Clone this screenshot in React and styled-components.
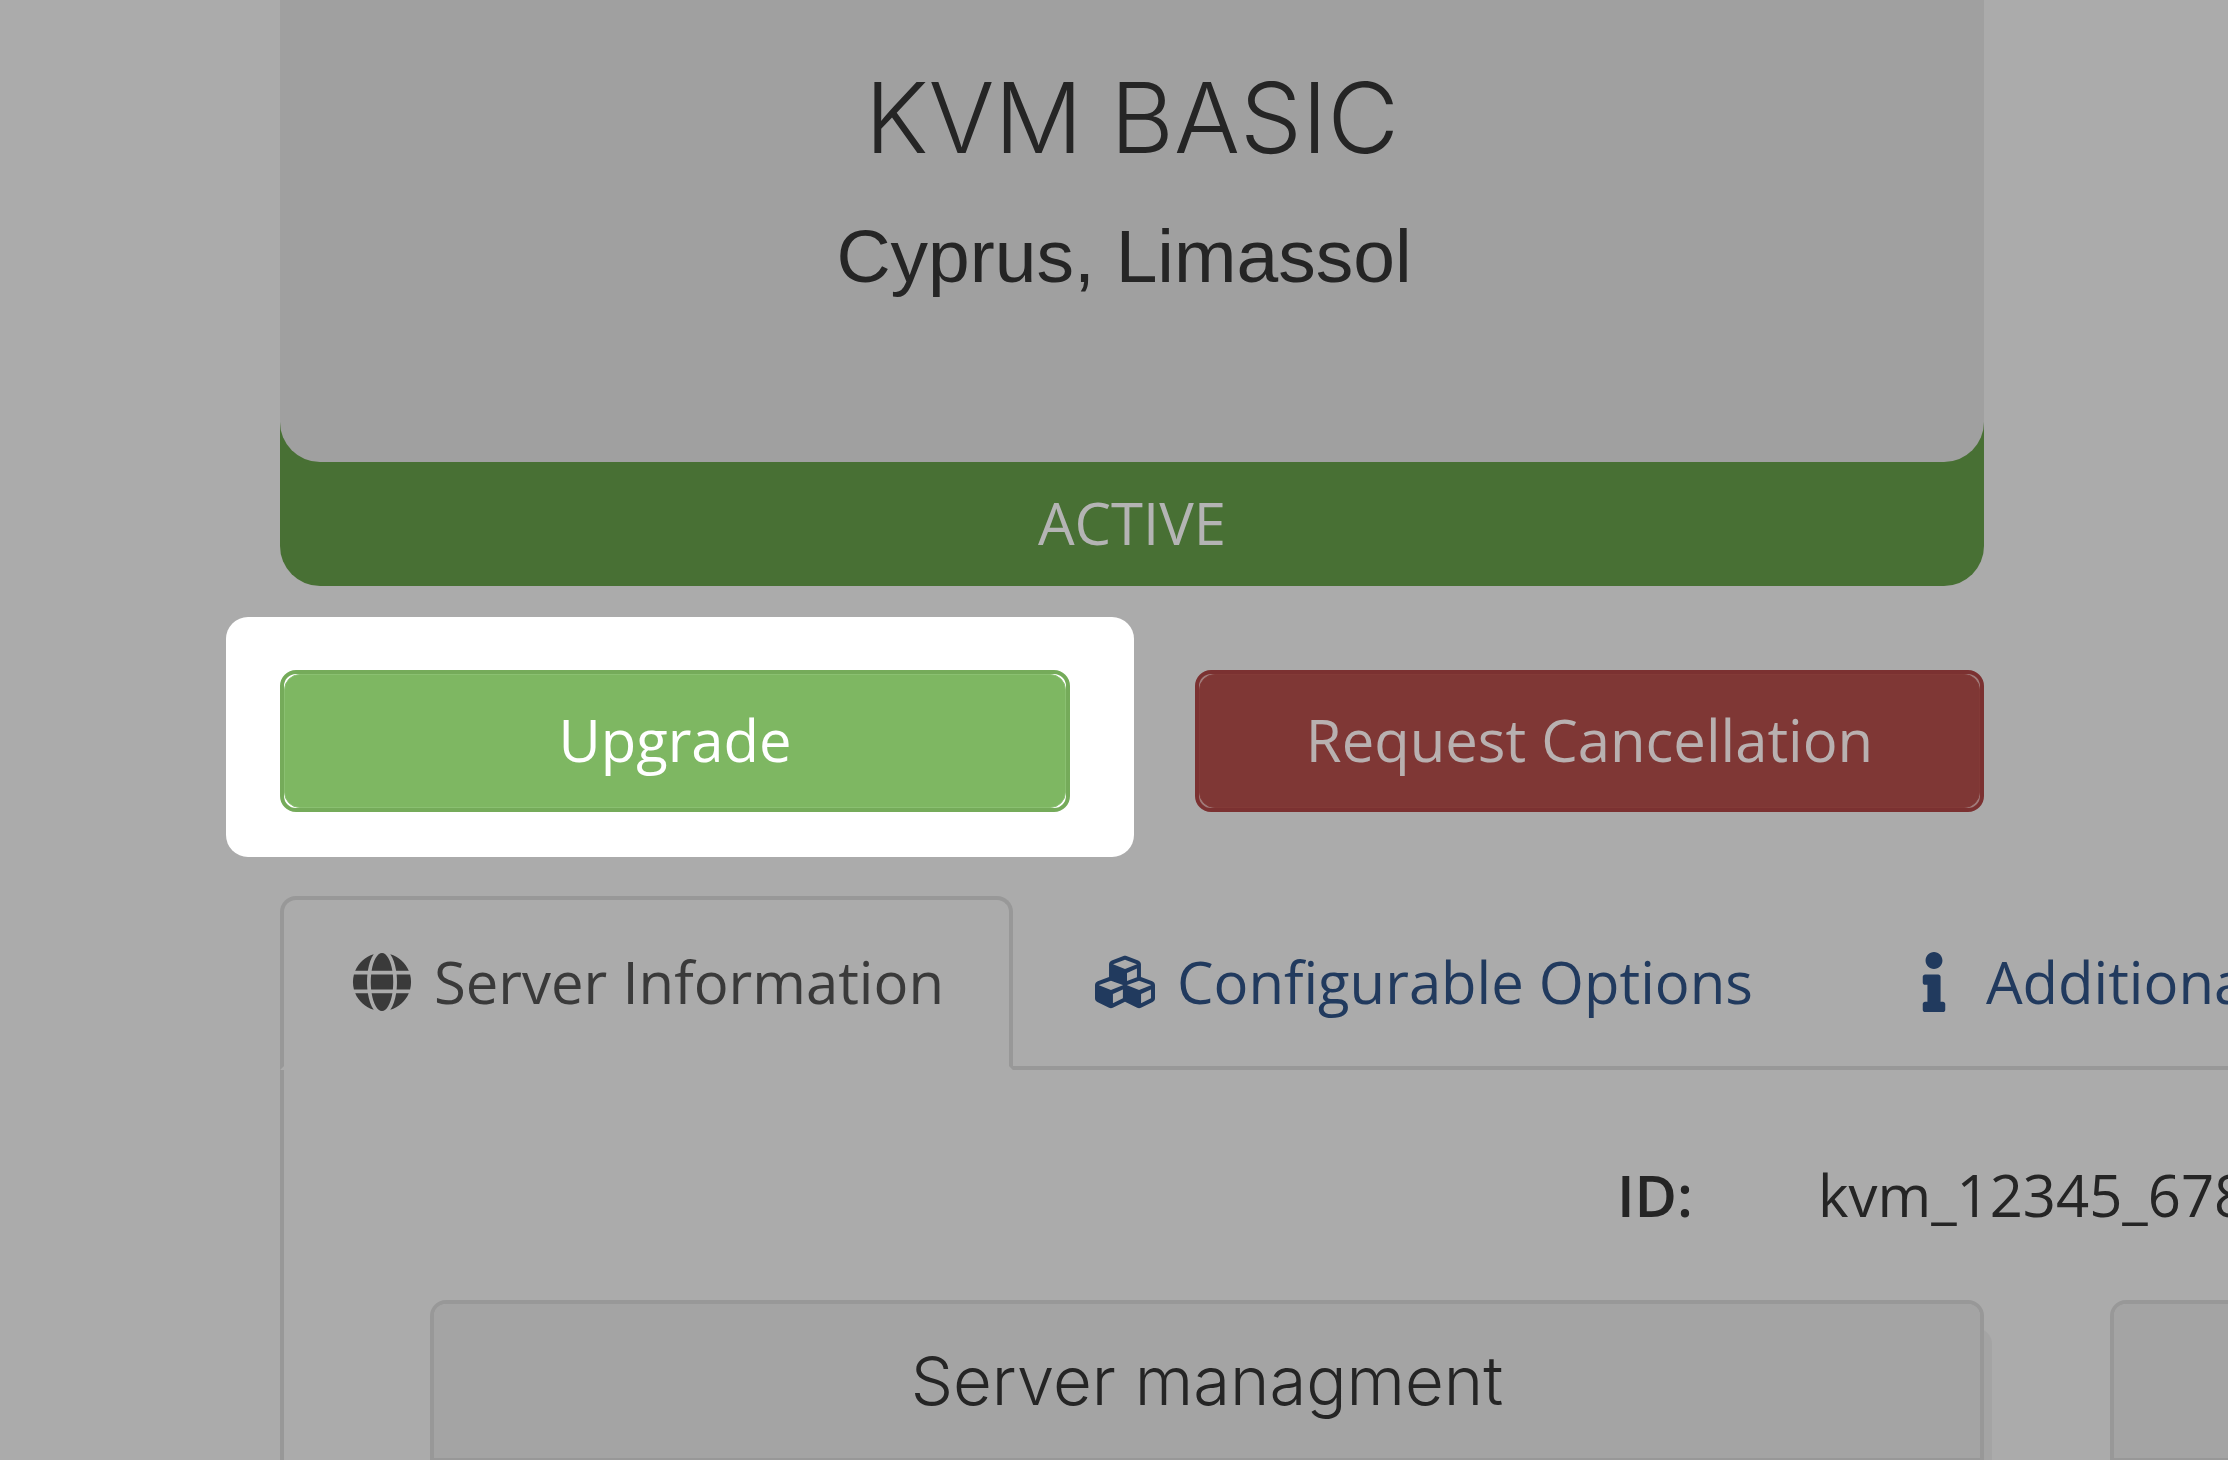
import React from "react";
import styled, { createGlobalStyle } from "styled-components";
import { FaCubes, FaGlobe, FaInfo } from "react-icons/fa";

const GlobalStyle = createGlobalStyle`
  *, *::before, *::after { box-sizing: border-box; }
  html, body, #root { height: 100%; }
  body {
    margin: 0;
    overflow: hidden;
    background: #ababab;
    color: #252525;
    font-family: "Open Sans", "Noto Sans", sans-serif;
    font-size: 58px;
    line-height: 86px;
  }
`;

const Page = styled.main`
  display: flex;
  flex-direction: column;
  height: 100%;
  padding-left: 280px;
  overflow: hidden;
`;

const Service = styled.section`
  flex: none;
  width: 100%;
  max-width: 1704px;
`;

const Status = styled.div`
  background: #487034;
  border-radius: 0 0 40px 40px;
`;

const Product = styled.div`
  padding: 60px 0 146px;
  background: #a0a0a0;
  border-radius: 0 0 40px 40px;
  text-align: center;
`;

const ProductName = styled.h1`
  margin: 0;
  font-family: Inter, sans-serif;
  font-size: 98px;
  font-weight: 300;
  line-height: 116px;
`;

const Location = styled.h2`
  margin: 20px 0 0;
  padding-right: 16px;
  font-family: "Liberation Sans", Arial, sans-serif;
  font-size: 75px;
  font-weight: 400;
  line-height: 120px;
`;

const StatusLabel = styled.p`
  margin: 0;
  padding: 18px 0 20px;
  color: #b4b4b4;
  text-align: center;
`;

const Actions = styled.div`
  display: flex;
  margin: 31px 0 39px -54px;
`;

const Spotlight = styled.div`
  flex: 0 0 908px;
  padding: 53px 64px 45px 54px;
  background: #fff;
  border-radius: 22px;
`;

const ActionSlot = styled.div`
  flex: 1;
  padding: 53px 0 45px 61px;
`;

const tones = {
  success: { fill: "#7eb762", border: "#75ab5a", edge: "#8ac071", corner: "#fff", text: "#fff" },
  danger: { fill: "#7f3735", border: "#7b3131", edge: "#833a37", corner: "#a07a79", text: "#b8b0b0" },
};

const ActionButton = styled.button`
  display: block;
  width: 100%;
  height: 142px;
  padding: 0;
  border: 4px solid ${({ $tone }) => tones[$tone].border};
  border-radius: 16px;
  background: ${({ $tone }) => tones[$tone].corner};
  color: ${({ $tone }) => tones[$tone].text};
  font: inherit;
  cursor: pointer;
`;

const ButtonFace = styled.span`
  display: flex;
  align-items: center;
  justify-content: center;
  height: 100%;
  padding-bottom: 2px;
  border: 1px solid ${({ $tone }) => tones[$tone].edge};
  border-radius: 16px;
  background: ${({ $tone }) => tones[$tone].fill};
`;

const Tabs = styled.nav`
  display: flex;
  flex: none;
  gap: 10px;
  border-bottom: 4px solid #989898;
`;

const Tab = styled.a`
  display: flex;
  flex: none;
  align-items: center;
  gap: 16px;
  height: 174px;
  margin-bottom: -4px;
  padding: 0 65px 2px 62px;
  border: 4px solid ${({ $active }) => ($active ? "#989898" : "transparent")};
  border-bottom-color: ${({ $active }) => ($active ? "#ababab" : "transparent")};
  border-radius: 16px 16px 0 0;
  background: ${({ $active }) => ($active ? "#ababab" : "transparent")};
  color: ${({ $active }) => ($active ? "#3a3a3a" : "#213a5e")};
  text-decoration: none;
  white-space: nowrap;
`;

const TabIcon = styled.span`
  display: flex;
  justify-content: center;
  width: 72px;
`;

const TabContent = styled.section`
  flex: 1;
  padding: 82px 0 0 146px;
  border-left: 4px solid #989898;
`;

const Details = styled.dl`
  display: grid;
  grid-template-columns: 1263px 1fr;
  column-gap: 125px;
  margin: 0 0 62px;
`;

const Term = styled.dt`
  font-weight: 600;
  text-align: right;
`;

const Value = styled.dd`
  margin: 0;
  white-space: nowrap;
`;

const Panels = styled.div`
  display: grid;
  grid-template-columns: repeat(2, 1554px);
  gap: 126px;
`;

const Panel = styled.article`
  height: 400px;
  border: 4px solid #989898;
  border-radius: 16px;
  background: #ababab;
  box-shadow: 8px 28px 0 #a4a4a4;
`;

const PanelHeading = styled.h3`
  height: 158px;
  margin: 0;
  padding: 34px 0;
  border-bottom: 4px solid #989898;
  border-radius: 12px 12px 0 0;
  background: #a4a4a4;
  font-family: Inter, sans-serif;
  font-size: 67px;
  font-weight: 300;
  line-height: 86px;
  text-align: center;
`;

const tabs = [
  { label: "Server Information", icon: FaGlobe, active: true },
  { label: "Configurable Options", icon: FaCubes },
  { label: "Additional", icon: FaInfo },
];

function Action({ tone, children }) {
  return (
    <ActionButton type="button" $tone={tone}>
      <ButtonFace $tone={tone}>{children}</ButtonFace>
    </ActionButton>
  );
}

export default function App() {
  return (
    <>
      <GlobalStyle />
      <Page>
        <Service>
          <Status>
            <Product>
              <ProductName>KVM BASIC</ProductName>
              <Location>Cyprus, Limassol</Location>
            </Product>
            <StatusLabel>ACTIVE</StatusLabel>
          </Status>
          <Actions>
            <Spotlight>
              <Action tone="success">Upgrade</Action>
            </Spotlight>
            <ActionSlot>
              <Action tone="danger">Request Cancellation</Action>
            </ActionSlot>
          </Actions>
        </Service>
        <Tabs>
          {tabs.map(({ label, icon: Icon, active }) => (
            <Tab key={label} href="#" $active={active} aria-current={active ? "page" : undefined}>
              <TabIcon>
                <Icon size={60} aria-hidden="true" />
              </TabIcon>
              {label}
            </Tab>
          ))}
        </Tabs>
        <TabContent>
          <Details>
            <Term>ID:</Term>
            <Value>kvm_12345_678</Value>
          </Details>
          <Panels>
            <Panel>
              <PanelHeading>Server managment</PanelHeading>
            </Panel>
            <Panel>
              <PanelHeading />
            </Panel>
          </Panels>
        </TabContent>
      </Page>
    </>
  );
}
